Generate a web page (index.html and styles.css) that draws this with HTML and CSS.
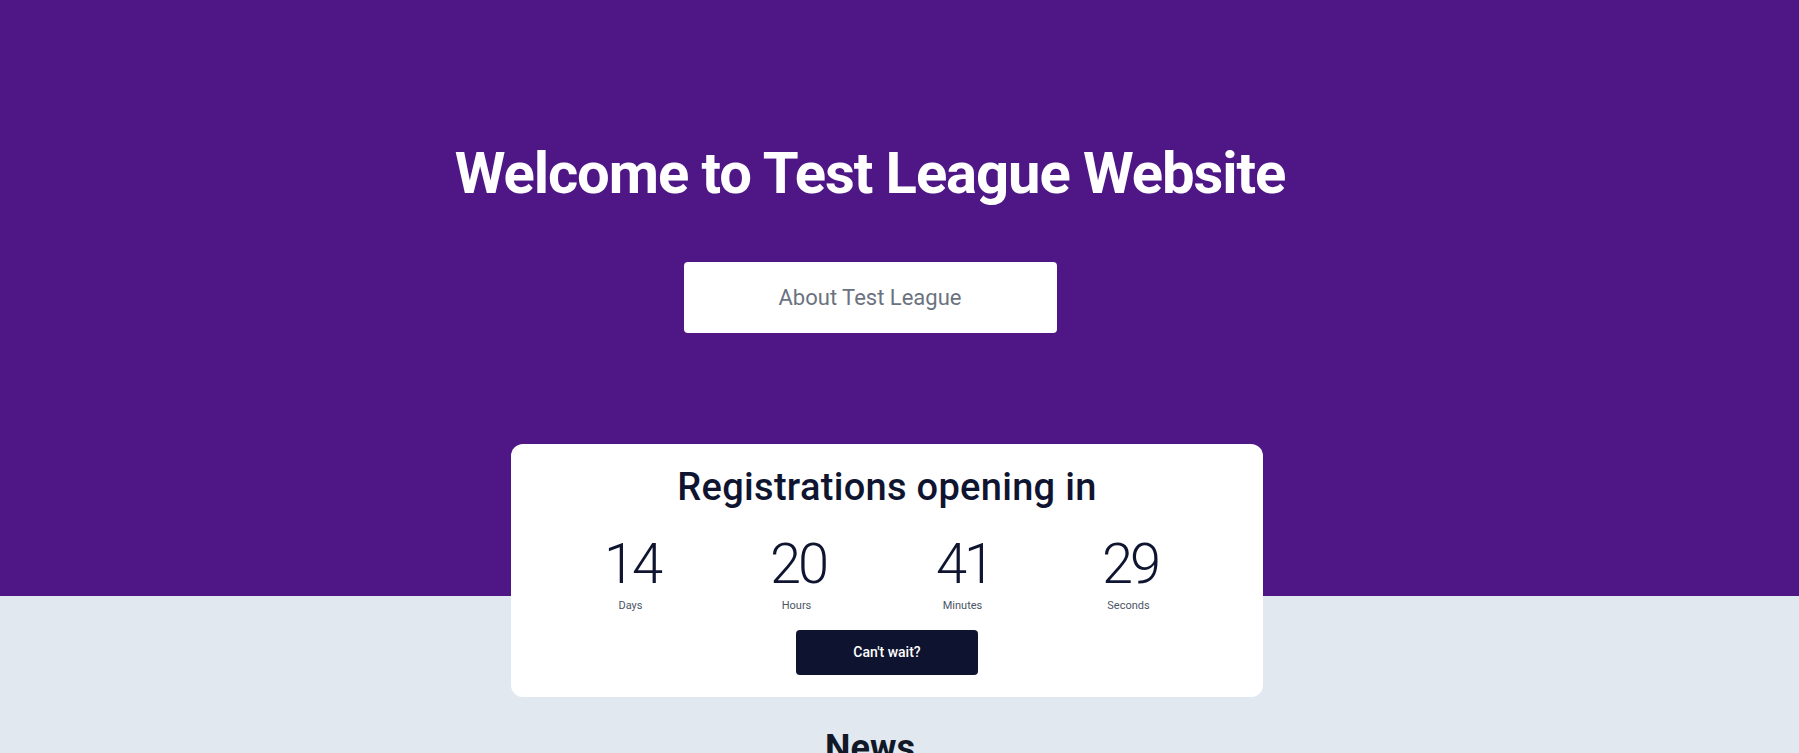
FILE: index.html
```html
<!DOCTYPE html>
<html>
<head>
    <link rel="stylesheet" href="styles.css">
</head>
<body>
    <div class="hero">
        <h1 class="hero-title">Welcome to Test League Website</h1>
        <a class="about-button" href="#">About Test League</a>
    </div>

    <div class="countdown-wrap">
        <div class="countdown-card">
            <h2 class="countdown-title">Registrations opening in</h2>
            <div class="countdown-grid">
                <div class="countdown-item">
                    <span class="countdown-value">14</span>
                    <span class="countdown-label">Days</span>
                </div>
                <div class="countdown-item">
                    <span class="countdown-value">20</span>
                    <span class="countdown-label">Hours</span>
                </div>
                <div class="countdown-item">
                    <span class="countdown-value">41</span>
                    <span class="countdown-label">Minutes</span>
                </div>
                <div class="countdown-item">
                    <span class="countdown-value">29</span>
                    <span class="countdown-label">Seconds</span>
                </div>
            </div>
            <a class="cant-wait" href="#">Can't wait?</a>
        </div>
    </div>

    <div class="news">
        <h2 class="news-title">News</h2>
    </div>

    <div class="chat-bubble"></div>
</body>
</html>
```

FILE: styles.css
```css
body {
    margin: 0;
    background-color: #e2e8f0;
    font-family: Roboto, "Noto Sans", sans-serif;
    color: #0f172a;
    overflow: hidden;
}
a {
    text-decoration: none;
}
.hero {
    background-color: #4f1786;
    height: 596px;
    box-sizing: border-box;
    padding: 139px 59px 0 0;
    display: flex;
    flex-direction: column;
    align-items: center;
}
.hero-title {
    margin: 0;
    font-size: 58px;
    line-height: 1.2;
    font-weight: 700;
    letter-spacing: -1.1px;
    color: #fff;
}
.about-button {
    margin-top: 53px;
    width: 373px;
    height: 71px;
    background-color: #fff;
    border-radius: 4px;
    color: #6b7280;
    font-size: 22px;
    display: flex;
    align-items: center;
    justify-content: center;
}
.countdown-wrap {
    margin-top: -152px;
    display: flex;
    justify-content: center;
    padding-left: 34px;
    padding-right: 59px;
}
.countdown-card {
    width: 752px;
    height: 253px;
    box-sizing: border-box;
    background-color: #fff;
    border-radius: 12px;
    padding: 21px 0 22px 0;
    display: flex;
    flex-direction: column;
    align-items: center;
}
.countdown-title {
    margin: 0;
    font-size: 38px;
    line-height: 1.2;
    font-weight: 500;
    letter-spacing: 0.3px;
    color: #0f1530;
}
.countdown-grid {
    margin-top: 25px;
    display: grid;
    grid-template-columns: repeat(4, 166px);
    margin-right: 15px;
}
.countdown-item {
    display: flex;
    flex-direction: column;
    align-items: center;
}
.countdown-value {
    font-size: 56px;
    line-height: 56px;
    font-weight: 300;
    letter-spacing: -3px;
    margin-right: -3px;
    color: #0f1530;
}
.countdown-label {
    margin-top: 6px;
    font-size: 11px;
    line-height: 16px;
    color: #4b5563;
}
.cant-wait {
    margin-top: 16px;
    width: 182px;
    height: 45px;
    border-radius: 4px;
    background-color: #0e1330;
    color: #fff;
    font-size: 14px;
    font-weight: 500;
    display: flex;
    align-items: center;
    justify-content: center;
}
.news {
    padding-right: 59px;
    margin-top: 30px;
    text-align: center;
}
.news-title {
    margin: 0;
    font-size: 36px;
    line-height: 1.2;
    font-weight: 700;
    color: #111827;
}
.chat-bubble {
    position: fixed;
    left: 1784px;
    top: 749px;
    width: 60px;
    height: 60px;
    border-radius: 50%;
    background-color: #0e1330;
}
```
